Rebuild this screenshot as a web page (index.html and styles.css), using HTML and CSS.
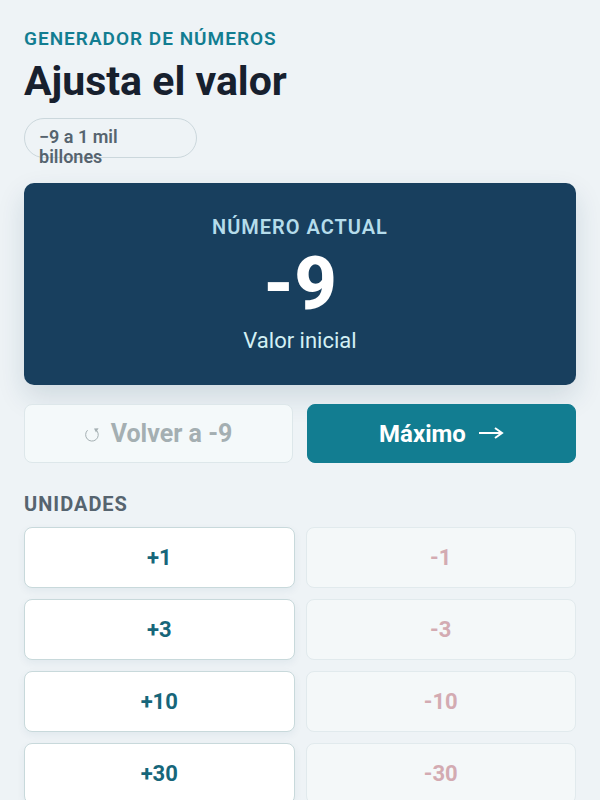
FILE: index.html
```html
<!DOCTYPE html>
<html lang="es">
<head>
    <meta charset="UTF-8" />
    <meta name="viewport" content="width=device-width, initial-scale=1.0" />
    <title>Generador de números</title>
    <link rel="stylesheet" href="styles.css">
</head>
<body>
    <main class="app">
        <header class="header">
            <p class="eyebrow">Generador de números</p>
            <h1>Ajusta el valor</h1>
            <div class="range">−9 a 1 mil billones</div>
        </header>

        <section class="display" aria-live="polite">
            <p class="display-label">Número actual</p>
            <output class="display-value">-9</output>
            <p class="display-note">Valor inicial</p>
        </section>

        <div class="actions">
            <button class="btn-reset" type="button" disabled>
                <svg class="icon-reset" viewBox="0 0 14 16" aria-hidden="true">
                    <path d="M2.6 4.2A6.3 6.3 0 1 0 12 5L10.6 3.4" />
                    <path class="head" d="M9 2.4L13.6 2.2L11 6.4Z" />
                </svg>
                Volver a -9
            </button>
            <button class="btn-max" type="button">
                Máximo
                <svg class="icon-arrow" viewBox="0 0 26 16" aria-hidden="true">
                    <path d="M1 7H24M17 2L24 7L17 12" />
                </svg>
            </button>
        </div>

        <section class="group">
            <h2>Unidades</h2>
            <div class="steps">
                <button class="plus" type="button">+1</button>
                <button class="minus" type="button" disabled>-1</button>
                <button class="plus" type="button">+3</button>
                <button class="minus" type="button" disabled>-3</button>
                <button class="plus" type="button">+10</button>
                <button class="minus" type="button" disabled>-10</button>
                <button class="plus" type="button">+30</button>
                <button class="minus" type="button" disabled>-30</button>
            </div>
        </section>
    </main>
</body>
</html>
```
FILE: styles.css
```css
* {
    box-sizing: border-box;
}

body {
    margin: 0;
    background-color: #eef3f6;
    color: #17202e;
    font-family: Roboto, "Liberation Sans", sans-serif;
}

h1, h2, p {
    margin: 0;
}

.app {
    padding: 28px 24px;
}

.eyebrow {
    color: #127d91;
    font-size: 19px;
    font-weight: 600;
    line-height: 22px;
    letter-spacing: 1px;
    text-transform: uppercase;
}

h1 {
    margin-top: 8px;
    font-size: 41px;
    font-weight: 700;
    line-height: 46px;
}

.range {
    width: 173px;
    height: 40px;
    margin-top: 14px;
    padding: 8px 14px;
    border: 1px solid #cbd7dc;
    border-radius: 20px;
    color: #56646f;
    font-size: 18px;
    font-weight: 600;
    line-height: 20px;
}

.display {
    display: flex;
    flex-direction: column;
    align-items: center;
    margin-top: 25px;
    padding: 32px 24px;
    border-radius: 10px;
    background-color: #183f5e;
    box-shadow: 0 12px 28px rgba(24, 63, 94, 0.14);
    text-align: center;
}

.display-label {
    color: #b5dceb;
    font-size: 20px;
    font-weight: 600;
    line-height: 24px;
    letter-spacing: 1px;
    text-transform: uppercase;
}

.display-value {
    margin: 7px 0 6px;
    color: #fff;
    font-size: 74px;
    font-weight: 800;
    line-height: 76px;
}

.display-note {
    color: #d3f0f4;
    font-size: 22px;
    line-height: 25px;
}

.actions {
    display: grid;
    grid-template-columns: 1fr 1fr;
    gap: 14px;
    margin-top: 19px;
}

button {
    border: 1px solid #c8d9db;
    border-radius: 8px;
    font-family: inherit;
    font-size: 22px;
    font-weight: 700;
    cursor: pointer;
}

button:disabled {
    cursor: default;
}

.btn-reset,
.btn-max {
    display: flex;
    align-items: center;
    justify-content: center;
    gap: 12px;
    height: 59px;
    font-size: 24px;
}

.btn-reset {
    border-color: #dde7ea;
    background-color: #f4f9fa;
    color: #a4afb2;
    font-size: 25px;
}

.btn-max {
    border-color: #127d91;
    background-color: #127d91;
    color: #fff;
}

.icon-reset,
.icon-arrow {
    height: 16px;
    fill: none;
    stroke: currentColor;
}

.icon-reset {
    width: 14px;
    stroke-width: 1;
}

.icon-reset .head {
    fill: currentColor;
    stroke: none;
}

.icon-arrow {
    width: 26px;
    stroke-width: 2;
}

.group {
    margin-top: 28px;
}

h2 {
    color: #56646f;
    font-size: 20px;
    font-weight: 700;
    line-height: 26px;
    letter-spacing: 1px;
    text-transform: uppercase;
}

.steps {
    display: grid;
    grid-template-columns: 1fr 1fr;
    gap: 11px;
    margin-top: 10px;
}

.steps button {
    height: 61px;
    padding-bottom: 2px;
}

.plus {
    background-color: #fff;
    box-shadow: 0 3px 8px rgba(24, 63, 94, 0.06);
    color: #17667a;
}

.minus {
    border-color: #e1eaed;
    background-color: #f4f8f9;
    color: #d3abb2;
}
```
